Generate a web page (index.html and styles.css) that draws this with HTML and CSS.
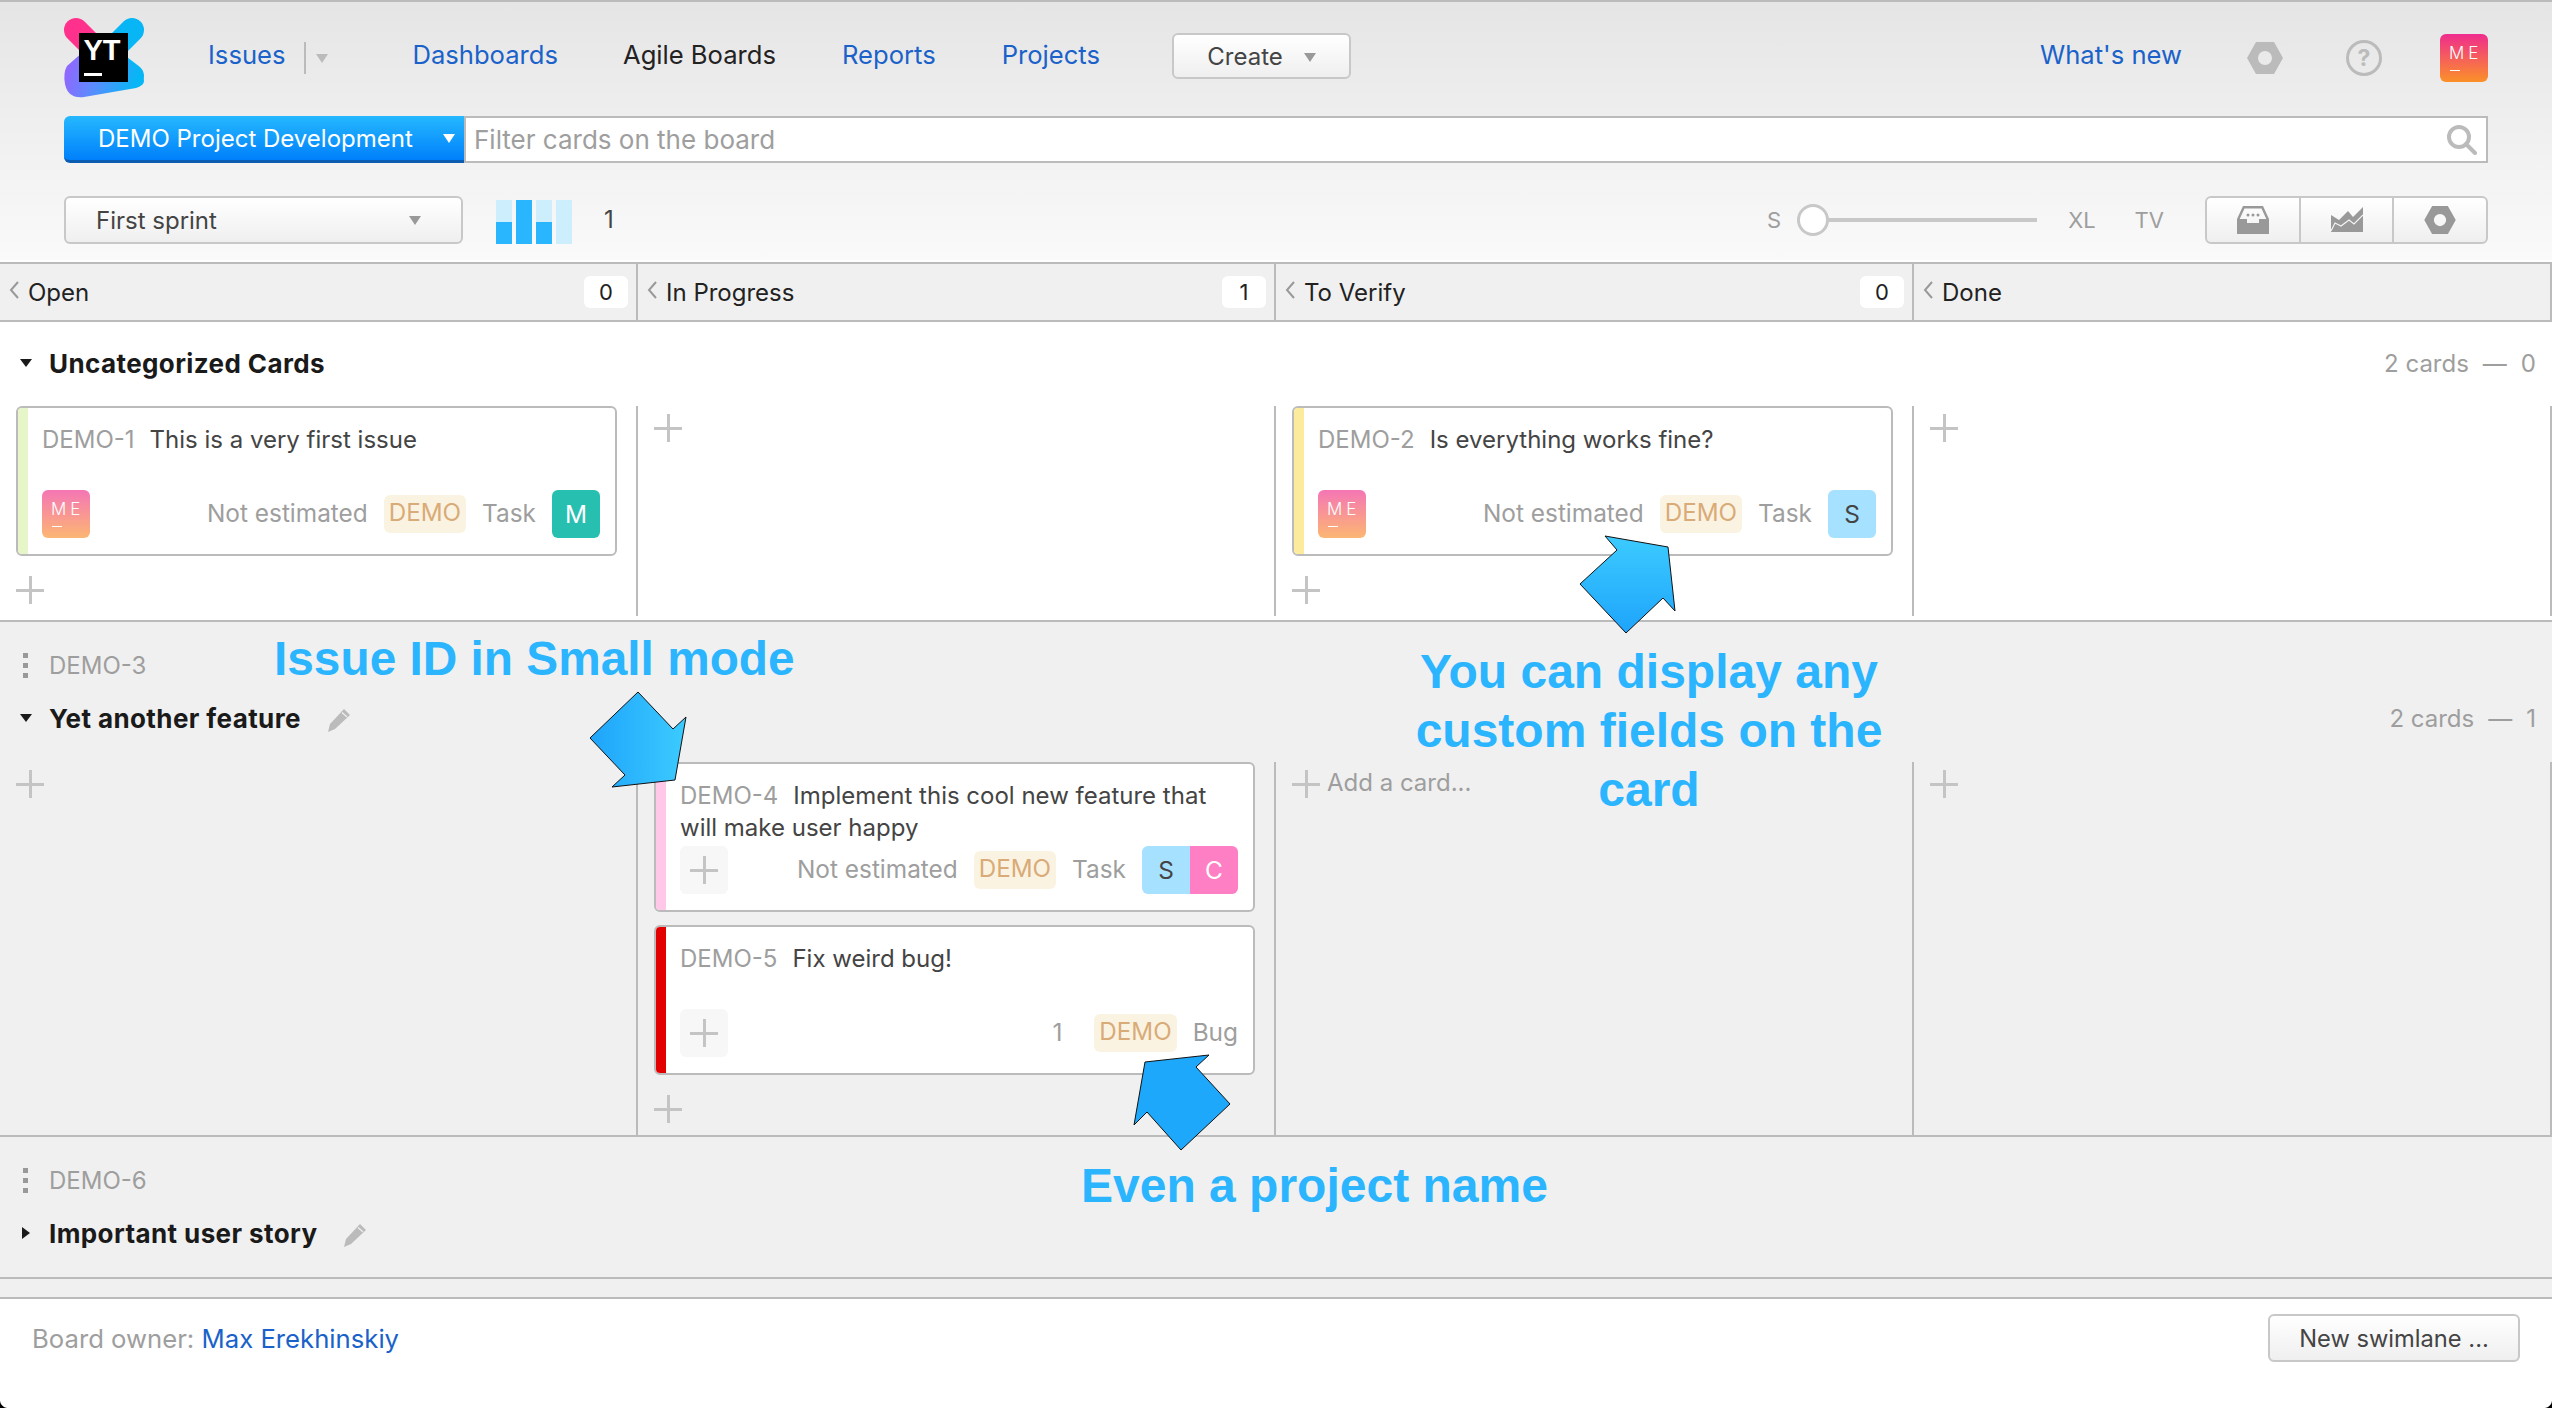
FILE: index.html
```html
<!DOCTYPE html>
<html>
<head>
  <meta charset="utf-8">
  <title>Agile Boards</title>
  <link rel="stylesheet" href="styles.css">
</head>
<body>
<svg class="defs" width="0" height="0">
  <defs>
    <symbol id="nut" viewBox="0 0 36 32">
      <path fill-rule="evenodd" d="M9 0H27L36 16L27 32H9L0 16ZM18 9A7 7 0 1 0 18 23A7 7 0 1 0 18 9Z"/>
    </symbol>
    <symbol id="pencil" viewBox="0 0 24 24">
      <path d="M17 1L23 7L8 21L1 24L3 16Z"/>
      <path d="M15 4.5L20 9" stroke="#f0f0f0" stroke-width="1.2"/>
    </symbol>
    <symbol id="chevron" viewBox="0 0 12 18">
      <path d="M10 1L3 9L10 17" fill="none" stroke="#999" stroke-width="2"/>
    </symbol>
    <linearGradient id="logo-low" x1="0" y1="0" x2="1" y2="0.2">
      <stop offset="0" stop-color="#a05cff"/>
      <stop offset="0.5" stop-color="#5b8cff"/>
      <stop offset="1" stop-color="#07b6f5"/>
    </linearGradient>
    <linearGradient id="arrow-down" x1="0" y1="0" x2="0" y2="1">
      <stop offset="0" stop-color="#3ccbff"/>
      <stop offset="1" stop-color="#1ea4fb"/>
    </linearGradient>
    <linearGradient id="arrow-side" x1="0" y1="0" x2="1" y2="0">
      <stop offset="0" stop-color="#1ea4fb"/>
      <stop offset="1" stop-color="#3ccbff"/>
    </linearGradient>
  </defs>
</svg>

<div class="app">
  <header class="top">
    <div class="nav-row">
      <svg class="logo" viewBox="0 0 80 80">
        <path d="M12 12L36 36" stroke="#ff318c" stroke-width="24" stroke-linecap="round"/>
        <path d="M68 12L42 38L68 58" fill="none" stroke="#08b5f5" stroke-width="24" stroke-linecap="round" stroke-linejoin="round"/>
        <path d="M3 48L28 26L62 40L78 58Q84 66 72 70L20 79Q4 81 1 66Q-1 55 3 48Z" fill="url(#logo-low)"/>
        <rect x="15" y="15" width="49" height="49"/>
        <text class="logo-text" x="19.500" y="42">YT</text>
        <rect x="20" y="55" width="18" height="3" fill="#fff"/>
      </svg>
      <a class="nav-link issues-link">Issues</a>
      <span class="nav-split"></span>
      <span class="caret caret-light"></span>
      <a class="nav-link nav-dash">Dashboards</a>
      <span class="nav-link nav-current">Agile Boards</span>
      <a class="nav-link">Reports</a>
      <a class="nav-link">Projects</a>
      <button class="btn create-btn">Create <span class="caret"></span></button>
      <a class="nav-link whats-new">What's new</a>
      <svg class="nav-nut"><use href="#nut"/></svg>
      <svg class="help-icon" viewBox="0 0 36 36">
        <circle cx="18" cy="18" r="16.5" fill="none" stroke="#bbb" stroke-width="3"/>
        <text x="18" y="26" text-anchor="middle" class="help-mark">?</text>
      </svg>
      <span class="avatar avatar-me"><span>ME</span><i></i></span>
    </div>

    <div class="search-row">
      <button class="project-btn">DEMO Project Development<span class="caret caret-white"></span></button>
      <div class="search-box">
        <span>Filter cards on the board</span>
        <svg class="search-icon" viewBox="0 0 30 30">
          <circle cx="12" cy="12" r="10" fill="none" stroke="#bbb" stroke-width="4"/>
          <path d="M19 19L28 28" stroke="#bbb" stroke-width="4" stroke-linecap="round"/>
        </svg>
      </div>
    </div>

    <div class="sprint-row">
      <button class="btn sprint-select">First sprint<span class="caret"></span></button>
      <div class="burndown">
        <span class="bar bar-half"></span>
        <span class="bar bar-full"></span>
        <span class="bar bar-half"></span>
        <span class="bar"></span>
      </div>
      <span class="sprint-count">1</span>
      <div class="sizes">
        <span>S</span>
        <div class="slider"><span class="thumb"></span></div>
        <span class="size-xl">XL</span>
        <span class="size-tv">TV</span>
      </div>
      <div class="btn-group">
        <button>
          <svg class="inbox-icon" viewBox="0 0 32 28">
            <path fill="#999" fill-rule="evenodd" d="M0 28V13L6 0H26L32 13V28ZM7.500 2.500L2.700 13H10V17H22V13H29.300L24.500 2.500Z"/>
            <circle cx="11" cy="9" r="1.500" fill="#999"/><circle cx="16" cy="9" r="1.500" fill="#999"/><circle cx="21" cy="9" r="1.500" fill="#999"/>
          </svg>
        </button>
        <button>
          <svg class="chart-icon" viewBox="0 0 32 26">
            <path fill="#999" d="M0 8L8 13L17 4L22 10L32 0V25H0Z"/>
            <path fill="none" stroke="#f4f4f4" stroke-width="1.200" d="M0 24L4 16L10 19L18 13L23 17L32 8"/>
          </svg>
        </button>
        <button><svg class="group-nut"><use href="#nut"/></svg></button>
      </div>
    </div>
  </header>

  <div class="col-heads">
    <div class="col-head"><svg class="chevron"><use href="#chevron"/></svg>Open<span class="counter">0</span></div>
    <div class="col-head"><svg class="chevron"><use href="#chevron"/></svg>In Progress<span class="counter">1</span></div>
    <div class="col-head"><svg class="chevron"><use href="#chevron"/></svg>To Verify<span class="counter">0</span></div>
    <div class="col-head"><svg class="chevron"><use href="#chevron"/></svg>Done</div>
  </div>

  <section class="lane lane-white">
    <div class="lane-head lane-head-plain">
      <div class="lane-title"><span class="tri-down"></span><b>Uncategorized Cards</b>
        <span class="lane-count">2 cards<em>—</em>0</span></div>
    </div>
    <div class="cells cells-first">
      <div class="cell">
        <article class="card">
          <span class="strip strip-lime"></span>
          <div class="card-body">
            <p class="card-title"><span class="card-id">DEMO-1</span>This is a very first issue</p>
            <div class="card-row">
              <span class="avatar avatar-faded"><span>ME</span><i></i></span>
              <span class="field field-first">Not estimated</span>
              <span class="tag">DEMO</span>
              <span class="field">Task</span>
              <span class="assignee assignee-m">M</span>
            </div>
          </div>
        </article>
        <span class="plus"></span>
      </div>
      <div class="cell"><span class="plus"></span></div>
      <div class="cell">
        <article class="card">
          <span class="strip strip-yellow"></span>
          <div class="card-body">
            <p class="card-title"><span class="card-id">DEMO-2</span>Is everything works fine?</p>
            <div class="card-row">
              <span class="avatar avatar-faded"><span>ME</span><i></i></span>
              <span class="field field-first">Not estimated</span>
              <span class="tag">DEMO</span>
              <span class="field">Task</span>
              <span class="assignee assignee-s">S</span>
            </div>
          </div>
        </article>
        <span class="plus"></span>
      </div>
      <div class="cell"><span class="plus"></span></div>
    </div>
  </section>

  <section class="lane">
    <div class="lane-head">
      <div class="lane-id"><span class="dots"></span>DEMO-3</div>
      <div class="lane-title"><span class="tri-down"></span><b>Yet another feature</b>
        <svg class="pencil"><use href="#pencil"/></svg>
        <span class="lane-count">2 cards<em>—</em>1</span></div>
    </div>
    <div class="cells">
      <div class="cell"><span class="plus"></span></div>
      <div class="cell">
        <article class="card">
          <span class="strip strip-pink"></span>
          <div class="card-body">
            <p class="card-title"><span class="card-id">DEMO-4</span>Implement this cool new feature that will make user happy</p>
            <div class="card-row">
              <span class="empty-slot"><span class="plus"></span></span>
              <span class="field field-first">Not estimated</span>
              <span class="tag">DEMO</span>
              <span class="field">Task</span>
              <span class="assignee assignee-s">S</span><span class="assignee assignee-c">C</span>
            </div>
          </div>
        </article>
        <article class="card">
          <span class="strip strip-red"></span>
          <div class="card-body">
            <p class="card-title"><span class="card-id">DEMO-5</span>Fix weird bug!</p>
            <div class="card-row">
              <span class="empty-slot"><span class="plus"></span></span>
              <span class="field field-first">1</span>
              <span class="tag tag-wide">DEMO</span>
              <span class="field">Bug</span>
            </div>
          </div>
        </article>
        <span class="plus"></span>
      </div>
      <div class="cell cell-add"><span class="plus"></span><span class="add-card">Add a card...</span></div>
      <div class="cell"><span class="plus"></span></div>
    </div>
  </section>

  <section class="lane">
    <div class="lane-head">
      <div class="lane-id"><span class="dots"></span>DEMO-6</div>
      <div class="lane-title"><span class="tri-right"></span><b>Important user story</b>
        <svg class="pencil"><use href="#pencil"/></svg></div>
    </div>
  </section>

  <div class="lane-end"></div>

  <footer class="foot">
    <span class="owner">Board owner: <a>Max Erekhinskiy</a></span>
    <button class="btn swimlane-btn">New swimlane ...</button>
  </footer>

  <!-- callouts drawn over the board -->
  <svg class="arrows" viewBox="0 0 2552 1408">
    <polygon fill="url(#arrow-down)" points="1605,536 1668,547 1675,611 1663,598 1626,633 1580,584 1617,550"/>
    <polygon fill="url(#arrow-side)" points="638,692 673,729 686,717 675,780 612,787 625,775 590,738"/>
    <polygon fill="#1ea8fb" points="1209,1055 1145,1062 1134,1125 1147,1112 1181,1150 1230,1104 1196,1067"/>
  </svg>
  <div class="note note-id">Issue ID in Small mode</div>
  <div class="note note-fields">You can display any<br>custom fields on the<br>card</div>
  <div class="note note-project">Even a project name</div>

  <span class="corner corner-left"></span>
  <span class="corner corner-right"></span>
</div>
</body>
</html>
```

FILE: styles.css
```css
* { box-sizing: border-box; }

html, body { margin: 0; background: #fff; }

body {
  font-family: Inter, "Noto Sans", sans-serif;
  font-size: 24px;
  color: #444;
}

.defs { position: absolute; }

a { color: #1a62c9; }

button { font: inherit; color: inherit; }

.app {
  position: relative;
  display: flex;
  flex-direction: column;
  width: 2552px;
  height: 1408px;
  overflow: hidden;
}

/* top bar */
.top {
  height: 262px;
  padding: 16px 64px 0;
  border-top: 2px solid #bbb;
  background: linear-gradient(#e5e5e5, #fafafa 258px, #fff 258px);
}

.nav-row { display: flex; align-items: center; height: 80px; }

.logo { width: 80px; height: 80px; flex: none; overflow: visible; }
.logo-text { font: 700 29px "Liberation Sans", sans-serif; fill: #fff; }

.nav-link { margin-left: 66px; padding-bottom: 7px; color: #1a62c9; font-size: 25.6px; }
.issues-link { margin-left: 64px; }
.nav-current { margin-left: 65px; color: #222; }
.nav-split { width: 2px; height: 32px; margin: 0 10px 0 19px; background: #bbb; }
.nav-dash { margin-left: 84px; }

.caret {
  display: inline-block;
  width: 0;
  height: 0;
  border: 6px solid transparent;
  border-top: 9px solid #999;
  border-bottom: 0;
}
.caret-light { border-top-color: #bbb; }
.caret-white { border-top-color: #fff; }

.btn {
  border: 2px solid #c8c8c8;
  border-radius: 6px;
  background: linear-gradient(#fff, #efefef);
}

.create-btn {
  width: 179px;
  height: 46px;
  margin: 0 0 4px 72px;
}
.create-btn .caret { margin: 0 0 3px 14px; }

.whats-new { margin-left: auto; }

.nav-nut { width: 36px; height: 32px; margin-left: 65px; fill: #bbb; }
.help-icon { width: 36px; height: 36px; margin-left: 63px; }
.help-mark { font: 700 23px Inter, sans-serif; fill: #bbb; }

.avatar {
  position: relative;
  flex: none;
  display: block;
  width: 48px;
  height: 48px;
  border-radius: 6px;
  background: linear-gradient(#ef2d8e, #fb9128);
  color: #fff;
}
.avatar span {
  position: absolute;
  left: 9px;
  top: 9px;
  font-size: 17px;
  font-weight: 300;
  letter-spacing: 4px;
}
.avatar i {
  position: absolute;
  left: 10px;
  top: 36px;
  width: 10px;
  height: 1px;
  background: #fff;
}
.avatar-me { margin-left: 58px; }
.avatar-faded { opacity: 0.65; }

.search-row { display: flex; height: 47px; margin-top: 18px; }

.project-btn {
  display: flex;
  align-items: center;
  flex: none;
  width: 400px;
  padding: 0 0 0 34px;
  border: 0;
  border-bottom: 3px solid #0a5cb0;
  border-radius: 6px 0 0 6px;
  background: linear-gradient(#25b8ff, #0080fb);
  color: #fff;
}
.project-btn .caret { margin-left: auto; margin-right: 9px; }

.search-box {
  display: flex;
  flex: 1;
  align-items: center;
  justify-content: space-between;
  padding: 0 9px 0 8px;
  border: 2px solid #bbb;
  background: #fff;
  color: #9e9e9e;
  font-size: 26px;
}
.search-icon { width: 30px; height: 30px; }

.sprint-row { display: flex; align-items: center; height: 48px; margin-top: 33px; }

.sprint-select {
  display: flex;
  align-items: center;
  justify-content: space-between;
  width: 399px;
  height: 48px;
  padding: 0 40px 0 30px;
}

.burndown { display: flex; gap: 4px; height: 44px; margin: 4px 0 0 33px; }
.bar { width: 16px; background: #cdeefd; }
.bar-half { background: linear-gradient(#cdeefd 50%, #29b6ff 50%); }
.bar-full { background: #29b6ff; }
.sprint-count { margin: 0 0 2px 32px; }

.sizes { display: flex; align-items: center; margin-left: auto; color: #9e9e9e; font-size: 22px; }
.slider {
  position: relative;
  width: 240px;
  height: 4px;
  margin-left: 16px;
  background: #c8c8c8;
}
.thumb {
  position: absolute;
  left: 0;
  top: -14px;
  width: 32px;
  height: 32px;
  border: 3px solid #c8c8c8;
  border-radius: 50%;
  background: #fff;
}
.size-xl { margin-left: 31px; }
.size-tv { margin-left: 39px; }

.btn-group {
  display: flex;
  width: 283px;
  height: 48px;
  margin-left: 41px;
  border: 2px solid #c8c8c8;
  border-radius: 6px;
  overflow: hidden;
  background: linear-gradient(#fff, #efefef);
}
.btn-group button {
  display: flex;
  flex: 1;
  align-items: center;
  justify-content: center;
  padding: 0;
  border: 0;
  border-right: 2px solid #c8c8c8;
  background: none;
}
.btn-group button:last-child { border-right: 0; }
.inbox-icon { width: 32px; height: 28px; }
.chart-icon { width: 32px; height: 26px; }
.group-nut { width: 32px; height: 28px; fill: #999; }

/* board */
.col-heads {
  display: grid;
  grid-template-columns: repeat(4, 1fr);
  height: 60px;
  border-top: 2px solid #bbb;
  border-bottom: 2px solid #bbb;
  background: #f0f0f0;
  color: #222;
}
.col-head {
  display: flex;
  align-items: center;
  padding: 0 8px;
  border-right: 2px solid #bbb;
}
.chevron { width: 12px; height: 18px; margin-right: 8px; margin-top: -4px; }
.counter {
  width: 44px;
  height: 32px;
  margin-left: auto;
  border-radius: 6px;
  background: #fff;
  font-size: 22px;
  line-height: 32px;
  text-align: center;
}

.lane { border-bottom: 2px solid #bbb; background: #f0f0f0; }
.lane-white { height: 300px; background: #fff; }

.lane-head { padding: 27px 16px 28px 20px; }
.lane-head-plain { padding-top: 25px; padding-bottom: 27px; }

.lane-id {
  display: flex;
  align-items: center;
  height: 32px;
  margin-bottom: 21px;
  color: #9e9e9e;
}
.dots {
  width: 5px;
  height: 25px;
  margin: 0 21px 0 3px;
  background: linear-gradient(#999 5px, transparent 5px) 0 0 / 5px 10px;
}

.lane-title { display: flex; align-items: center; height: 32px; color: #1a1a1a; }
.lane-title b { margin-left: 17px; font-size: 26px; font-weight: 700; letter-spacing: 0.4px; }

.tri-down {
  flex: none;
  width: 0;
  border: 6px solid transparent;
  border-top: 8px solid #1a1a1a;
  border-bottom: 0;
}
.tri-right {
  flex: none;
  width: 0;
  margin: 0 2px;
  border: 6px solid transparent;
  border-left: 8px solid #1a1a1a;
  border-right: 0;
}

.pencil { width: 24px; height: 24px; margin: 4px 0 0 26px; fill: #bbb; }

.lane-count { margin-left: auto; color: #9e9e9e; }
.lane-count em { margin: 0 14px; font-style: normal; }

.cells { display: grid; grid-template-columns: repeat(4, 1fr); height: 373px; }
.cells-first { height: 210px; }

.cell {
  display: flex;
  flex-direction: column;
  align-items: flex-start;
  padding: 0 19px 0 16px;
  border-right: 2px solid #bbb;
}

.plus {
  flex: none;
  width: 28px;
  height: 28px;
  margin-top: 8px;
  background:
    linear-gradient(#c4c4c4, #c4c4c4) center / 100% 3px no-repeat,
    linear-gradient(#c4c4c4, #c4c4c4) center / 3px 100% no-repeat;
}
.card + .plus { margin-top: 20px; }

.cell-add { flex-direction: row; align-items: flex-start; }
.add-card { margin: 6px 0 0 7px; color: #9e9e9e; }

.card {
  display: flex;
  flex: none;
  width: 100%;
  height: 150px;
  overflow: hidden;
  border: 2px solid #bbb;
  border-radius: 6px;
  background: #fff;
}
.card + .card { margin-top: 13px; }

.strip { flex: none; width: 10px; }
.strip-lime { background: #e6f6c8; }
.strip-yellow { background: #fdeb9d; }
.strip-pink { background: #ffc8e8; }
.strip-red { background: #e30000; }

.card-body {
  display: flex;
  flex: 1;
  flex-direction: column;
  min-width: 0;
  padding: 16px 15px 16px 14px;
}
.card-title { margin: 0; line-height: 32px; }
.card-id { margin-right: 15px; color: #9e9e9e; }

.card-row { display: flex; align-items: center; height: 48px; margin-top: auto; color: #9e9e9e; font-size: 24.4px; }
.field { padding-bottom: 2px; }
.field-first { margin-left: auto; }

.tag {
  height: 38px;
  margin: 0 16px;
  padding: 0 5px;
  border-radius: 6px;
  background: #fbf3e1;
  color: #d9ab78;
  font-size: 24.2px;
  line-height: 36px;
}
.tag-wide { margin-left: 32px; }

.assignee {
  width: 48px;
  height: 48px;
  line-height: 48px;
  text-align: center;
}
.assignee:first-of-type, .field + .assignee { margin-left: 16px; border-radius: 6px 0 0 6px; }
.assignee:last-child { border-top-right-radius: 6px; border-bottom-right-radius: 6px; }
.assignee-m { background: #26bfb0; color: #fff; }
.assignee-s { background: #a6e1ff; color: #444; }
.assignee-c { background: #ff7fc4; color: #fff; }

.empty-slot {
  display: flex;
  align-items: center;
  justify-content: center;
  width: 48px;
  height: 48px;
  border-radius: 6px;
  background: #f7f7f7;
}
.empty-slot .plus { margin: 0; }

.lane-end { height: 20px; border-bottom: 2px solid #bbb; background: #f0f0f0; }

.foot {
  display: flex;
  flex: 1;
  align-items: flex-start;
  justify-content: space-between;
  padding: 15px 32px 0 32px;
}
.owner { margin-top: 9px; color: #9e9e9e; font-size: 25.7px; }
.swimlane-btn { width: 252px; height: 48px; font-size: 23.7px; }

/* callouts */
.arrows {
  position: absolute;
  left: 0;
  top: 0;
  width: 2552px;
  height: 1408px;
  pointer-events: none;
}
.arrows polygon { stroke: #111; stroke-width: 1; }

.note {
  position: absolute;
  color: #2cb5ff;
  font: 700 48px / 59px "Liberation Sans", sans-serif;
  white-space: nowrap;
}
.note-id { left: 274px; top: 629px; font-size: 47.8px; }
.note-fields { left: 1349px; top: 642px; width: 600px; text-align: center; }
.note-project { left: 1081px; top: 1156px; }

.corner { position: absolute; bottom: 0; width: 8px; height: 8px; }
.corner-left { left: 0; background: radial-gradient(circle at 100% 0, transparent 7.500px, #000 8.500px); }
.corner-right { right: 0; background: radial-gradient(circle at 0 0, transparent 7.500px, #000 8.500px); }
```
